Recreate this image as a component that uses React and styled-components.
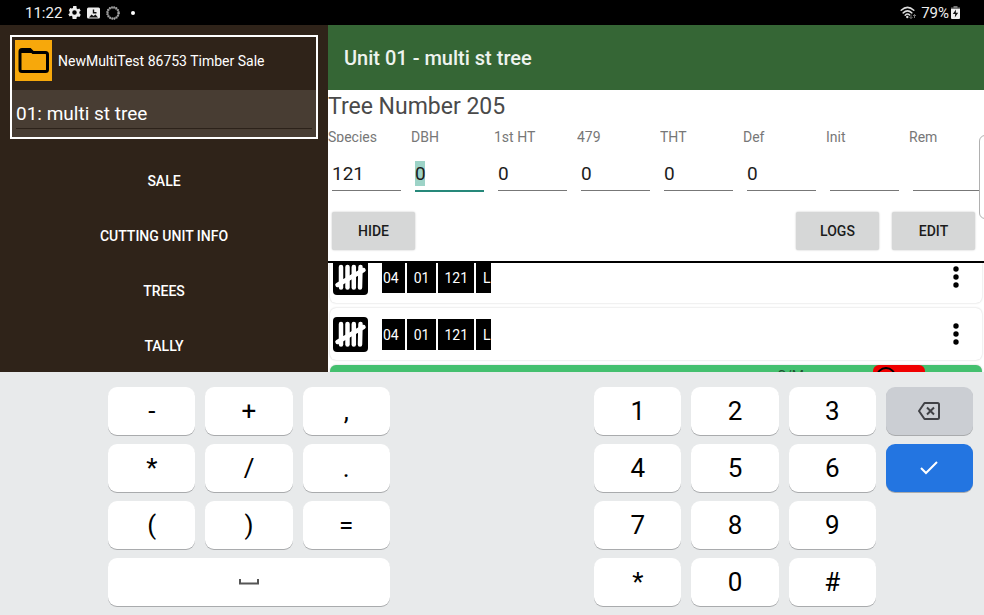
import React from "react";
import styled, { createGlobalStyle } from "styled-components";

const GlobalStyle = createGlobalStyle`
  *, *::before, *::after { box-sizing: border-box; }
  body { margin: 0; font-family: Roboto, "Noto Sans", sans-serif; background: #e8eaeb; }
  button, input, select { font: inherit; color: inherit; margin: 0; }
  ul { list-style: none; margin: 0; padding: 0; }
`;

const Screen = styled.div`
  display: grid;
  grid-template-rows: auto minmax(0, 1fr) auto;
  height: 100vh;
  overflow: hidden;
`;

const StatusBar = styled.header`
  display: flex;
  justify-content: space-between;
  align-items: center;
  height: 25px;
  padding: 0 24px 0 25px;
  background: #000;
  color: #eee;
  font-size: 15px;
  line-height: 24px;
`;

const StatusGroup = styled.div`
  display: flex;
  align-items: center;
  gap: ${(p) => p.$gap}px;
`;

const Main = styled.div`
  display: grid;
  grid-template-columns: minmax(0, 1fr) minmax(0, 2fr);
  min-height: 0;
`;

const Sidebar = styled.aside`
  padding: 10px;
  background: #2f2319;
  color: #fff;
  overflow: hidden;
`;

const SaleCard = styled.section`
  border: 2px solid #fff;
`;

const SaleHead = styled.div`
  display: flex;
  align-items: flex-start;
  gap: 6px;
  height: 53px;
  padding: 3px;
  font-size: 14px;
  line-height: 42px;
`;

const FolderTile = styled.div`
  display: flex;
  width: 37px;
  height: 41px;
  background: #f7a80b;
`;

const UnitPicker = styled.div`
  height: 47px;
  padding: 9px 4px 8px;
  background: #483d33;
`;

const UnitSelect = styled.select`
  display: block;
  appearance: none;
  width: 100%;
  height: 30px;
  padding: 0;
  border: 0;
  border-bottom: 1px solid #2c221a;
  border-radius: 0;
  background: transparent;
  font-size: 19px;
  outline: none;
`;

const Nav = styled.nav`
  display: flex;
  flex-direction: column;
  gap: 7px;
  padding-top: 18px;
`;

const NavButton = styled.button`
  height: 48px;
  padding: 0;
  border: 0;
  background: transparent;
  font-size: 14px;
  font-weight: 500;
  text-transform: uppercase;
`;

const Content = styled.main`
  position: relative;
  display: flex;
  flex-direction: column;
  min-height: 0;
  background: #fff;
  overflow: hidden;
`;

const TitleBar = styled.h1`
  flex: none;
  margin: 0;
  padding: 2px 16px 0;
  background: #356635;
  color: #eef3ee;
  font-size: 20px;
  font-weight: 500;
  line-height: 63px;
`;

const TreeForm = styled.form`
  flex: none;
  border-bottom: 2px solid #000;
`;

const TreeHeading = styled.h2`
  margin: 0;
  padding-top: 2px;
  color: #4a4a4a;
  font-size: 23px;
  font-weight: 400;
  line-height: 30px;
`;

const Fields = styled.div`
  display: flex;
  overflow: hidden;
`;

const Field = styled.label`
  flex: none;
  width: 83px;
`;

const FieldLabel = styled.span`
  display: block;
  height: 20px;
  overflow: hidden;
  padding-top: 7px;
  color: #777;
  font-size: 14px;
  line-height: 16px;
`;

const FieldInput = styled.input`
  display: block;
  width: 69px;
  height: ${(p) => (p.$active ? 40 : 39)}px;
  margin: 10px 10px 0 4px;
  padding: ${(p) => (p.$active ? "5px 0 0" : "4px 0 0")};
  border: 0;
  border-bottom: ${(p) => (p.$active ? "2px solid #26887a" : "1px solid #777")};
  border-radius: 0;
  background: ${(p) =>
    p.$active
      ? "linear-gradient(#9dd3c7, #9dd3c7) 0 9px / 10px 25px no-repeat"
      : "transparent"};
  color: #1c1c1c;
  font-size: 19px;
  outline: none;
`;

const FormActions = styled.div`
  display: flex;
  gap: 13px;
  padding: 20px 9px 11px 4px;
`;

const ActionButton = styled.button`
  width: 83px;
  height: 38px;
  margin-right: ${(p) => (p.$pushRest ? "auto" : "0")};
  padding: 0;
  border: 0;
  border-radius: 2px;
  background: #d6d7d7;
  box-shadow: 0 0 2px rgba(0, 0, 0, 0.25);
  color: #1c1c1c;
  font-size: 14px;
  font-weight: 500;
`;

const EdgeHandle = styled.div`
  position: absolute;
  top: 110px;
  right: -12px;
  width: 17px;
  height: 84px;
  border: 1px solid #b0b0b0;
  border-radius: 6px;
  background: #fff;
`;

const ListViewport = styled.div`
  flex: 1;
  min-height: 0;
  overflow: hidden;
`;

const TallyList = styled.ul`
  display: flex;
  flex-direction: column;
  gap: 5px;
  margin-top: -12px;
  padding: 0 2px;
`;

const TallyCard = styled.li`
  display: flex;
  align-items: center;
  height: 52px;
  padding: 0 14px 0 3px;
  border-radius: 6px;
  background: ${(p) => (p.$highlight ? "#44c06f" : "#fff")};
  box-shadow: 0 0 2px rgba(0, 0, 0, 0.22);
  overflow: hidden;
`;

const ChipStrip = styled.div`
  width: 109px;
  margin: 0 auto 0 14px;
  overflow: hidden;
`;

const ChipTrack = styled.div`
  display: flex;
  gap: 2px;
  margin-left: -6px;
`;

const Chip = styled.span`
  flex: none;
  padding: 1px 6px 0 7px;
  background: #000;
  color: #fff;
  font-size: 14px;
  line-height: 30px;
`;

const MoreButton = styled.button`
  display: flex;
  justify-content: center;
  width: 24px;
  padding: 0;
  border: 0;
  background: transparent;
`;

const MeasureLabel = styled.span`
  align-self: flex-start;
  margin-left: auto;
  padding-top: 3px;
  color: #1d5230;
  font-size: 14px;
  line-height: 16px;
`;

const RemoveButton = styled.button`
  display: flex;
  align-items: flex-start;
  align-self: flex-start;
  width: 52px;
  height: 48px;
  margin: 0 43px 0 69px;
  padding: 1px 2px;
  border: 0;
  border-radius: 6px;
  background: #f00000;
`;

const Keyboard = styled.section`
  display: grid;
  grid-template-columns: repeat(10, minmax(0, 1fr));
  grid-auto-rows: 48px;
  gap: 9px 10px;
  padding: 15px 11px 9px;
  background: #e8eaeb;
`;

const keyColors = {
  plain: { bg: "#fff", ink: "#000" },
  muted: { bg: "#cbced3", ink: "#414246" },
  accent: { bg: "#2375e1", ink: "#fff" },
};

const Key = styled.button`
  grid-column: ${(p) => p.$col} / span ${(p) => p.$span || 1};
  grid-row: ${(p) => p.$row};
  display: flex;
  align-items: center;
  justify-content: center;
  padding: 0;
  border: 0;
  border-radius: 9px;
  background: ${(p) => keyColors[p.$tone || "plain"].bg};
  color: ${(p) => keyColors[p.$tone || "plain"].ink};
  box-shadow: 0 1px 0 #a9abad;
  font-size: 26px;
  line-height: 48px;
`;

function FolderIcon() {
  return (
    <svg width="37" height="41" viewBox="0 0 37 41" aria-hidden="true">
      <path d="M5 15V11.500Q5 9.500 7 9.500H15L18 12.500H30.500Q32.500 12.500 32.500 14.500V29.500Q32.500 31.500 30.500 31.500H7Q5 31.500 5 29.500Z" fill="none" stroke="#000" strokeWidth="3" />
      <path d="M5 9H15L18 13H5Z" fill="#000" />
    </svg>
  );
}

function GearIcon() {
  return (
    <svg width="13" height="13" viewBox="2 2 20 20" aria-hidden="true">
      <path fill="#eee" fillRule="evenodd" d="M19.400 13a7.500 7.500 0 0 0 0-2l2.100-1.600-2-3.500-2.500 1a7.500 7.500 0 0 0-1.700-1L15 2h-5l-.4 2.900a7.500 7.500 0 0 0-1.700 1l-2.500-1-2 3.500L4.600 11a7.500 7.500 0 0 0 0 2l-2.100 1.600 2 3.500 2.500-1a7.500 7.500 0 0 0 1.700 1L9 22h6l.4-2.900a7.500 7.500 0 0 0 1.700-1l2.500 1 2-3.500ZM12 15.500a3.500 3.500 0 1 1 0-7 3.500 3.500 0 0 1 0 7Z" />
    </svg>
  );
}

function PictureIcon() {
  return (
    <svg width="13" height="12" viewBox="0 0 13 12" aria-hidden="true">
      <rect x="0" y="0.500" width="13" height="11" rx="1.500" fill="#eee" />
      <path d="M2 10.500L4.500 7.500L6.500 9L8.500 7.500L11 10.500Z" fill="#111" />
      <path d="M6.500 2.500V5.800H9.500" fill="none" stroke="#111" strokeWidth="1.400" />
    </svg>
  );
}

function SpinnerIcon() {
  return (
    <svg width="14" height="14" viewBox="0 0 14 14" aria-hidden="true">
      <circle cx="7" cy="7" r="5.600" fill="none" stroke="#777" strokeWidth="1.600" />
      <circle cx="7" cy="7" r="5.600" fill="none" stroke="#aaa" strokeWidth="2.400" strokeDasharray="1 1.200" />
    </svg>
  );
}

function DotIcon() {
  return (
    <svg width="14" height="4" viewBox="0 0 14 4" aria-hidden="true">
      <circle cx="7" cy="2" r="2" fill="#fff" />
    </svg>
  );
}

function WifiIcon() {
  return (
    <svg width="17" height="14" viewBox="0 0 17 14" aria-hidden="true">
      <g fill="none" stroke="#ddd" strokeWidth="1.500" strokeLinecap="round">
        <path d="M1.200 4.300Q7.500 -1.500 13.800 4.300" />
        <path d="M3.200 6.900Q7.500 2.900 11.800 6.900" />
        <path d="M5.200 9.200Q7.500 7.100 9.500 8.900" />
      </g>
      <circle cx="7.300" cy="11" r="1.200" fill="#ddd" />
      <path d="M11 8.500V12.500M9.500 11L11 12.600L12.500 11M14.500 12V8.500M13 10L14.500 8.400L16 10" fill="none" stroke="#777" />
    </svg>
  );
}

function BatteryIcon() {
  return (
    <svg width="9" height="13" viewBox="0 0 9 13" aria-hidden="true">
      <path d="M2.500 0H6.500V1.500H9V4H0V1.500H2.500Z" fill="#777" />
      <path d="M0 3H9V12Q9 13 8 13H1Q0 13 0 12Z" fill="#eee" />
      <path d="M5 3.500L1.800 8H4.200L3.800 11.500L7.200 6.800H4.800Z" fill="#111" />
    </svg>
  );
}

function TallyIcon() {
  return (
    <svg width="35" height="35" viewBox="0 0 35 35" aria-hidden="true">
      <rect width="35" height="35" rx="4" fill="#000" />
      <g stroke="#fff" strokeWidth="4.500" strokeLinecap="round" strokeLinejoin="round" fill="none">
        <path d="M8 7V27.500" />
        <path d="M14.500 7V27.500" />
        <path d="M20.800 7V27.500" />
        <path d="M27.500 7L27 27.500" />
        <path d="M4.500 25L30.500 10" />
      </g>
    </svg>
  );
}

function MoreIcon() {
  return (
    <svg width="6" height="22" viewBox="0 0 6 22" aria-hidden="true">
      <circle cx="3" cy="3" r="2.700" />
      <circle cx="3" cy="11" r="2.700" />
      <circle cx="3" cy="19" r="2.700" />
    </svg>
  );
}

function RemoveIcon() {
  return (
    <svg width="22" height="22" viewBox="0 0 22 22" aria-hidden="true">
      <circle cx="11" cy="11" r="9" fill="none" stroke="#000" strokeWidth="2" />
      <path d="M6 11H16" stroke="#000" strokeWidth="2" />
    </svg>
  );
}

function SpaceIcon() {
  return (
    <svg width="20" height="6" viewBox="0 0 20 6" aria-hidden="true">
      <path d="M1 0V4.500H19V0" fill="none" stroke="#555" strokeWidth="2" />
    </svg>
  );
}

function BackspaceIcon() {
  return (
    <svg width="22" height="18" viewBox="0 0 22 18" aria-hidden="true">
      <g fill="none" stroke="currentColor" strokeWidth="2">
        <path d="M6.500 1H19.500Q21 1 21 2.500V15.500Q21 17 19.500 17H6.500L1 9Z" strokeLinejoin="round" />
        <path d="M9 5.500L16 12.500M16 5.500L9 12.500" />
      </g>
    </svg>
  );
}

function CheckIcon() {
  return (
    <svg width="18" height="14" viewBox="0 0 18 14" aria-hidden="true">
      <path d="M1 7L6 12L17 1" fill="none" stroke="currentColor" strokeWidth="2" />
    </svg>
  );
}

const navItems = ["Sale", "Cutting Unit Info", "Trees", "Tally"];

const fields = [
  { label: "Species", value: "121" },
  { label: "DBH", value: "0", active: true },
  { label: "1st HT", value: "0" },
  { label: "479", value: "0" },
  { label: "THT", value: "0" },
  { label: "Def", value: "0" },
  { label: "Init", value: "" },
  { label: "Rem", value: "" },
];

const tallies = [
  { id: 1, chips: ["04", "01", "121", "L"] },
  { id: 2, chips: ["04", "01", "121", "L"] },
];

const keyRows = [
  [[2, "-"], [3, "+"], [4, ","], [7, "1"], [8, "2"], [9, "3"]],
  [[2, "*"], [3, "/"], [4, "."], [7, "4"], [8, "5"], [9, "6"]],
  [[2, "("], [3, ")"], [4, "="], [7, "7"], [8, "8"], [9, "9"]],
  [[7, "*"], [8, "0"], [9, "#"]],
];

export default function App() {
  return (
    <Screen>
      <GlobalStyle />
      <StatusBar>
        <StatusGroup $gap={6}>
          <span>11:22</span>
          <GearIcon />
          <PictureIcon />
          <SpinnerIcon />
          <DotIcon />
        </StatusGroup>
        <StatusGroup $gap={4}>
          <WifiIcon />
          <StatusGroup $gap={2}>
            <span>79%</span>
            <BatteryIcon />
          </StatusGroup>
        </StatusGroup>
      </StatusBar>

      <Main>
        <Sidebar>
          <SaleCard>
            <SaleHead>
              <FolderTile>
                <FolderIcon />
              </FolderTile>
              <span>NewMultiTest 86753 Timber Sale</span>
            </SaleHead>
            <UnitPicker>
              <UnitSelect aria-label="Cutting unit" defaultValue="01">
                <option value="01">01: multi st tree</option>
              </UnitSelect>
            </UnitPicker>
          </SaleCard>
          <Nav>
            {navItems.map((item) => (
              <NavButton key={item} type="button">{item}</NavButton>
            ))}
          </Nav>
        </Sidebar>

        <Content>
          <TitleBar>Unit 01 - multi st tree</TitleBar>
          <TreeForm onSubmit={(e) => e.preventDefault()}>
            <TreeHeading>Tree Number 205</TreeHeading>
            <Fields>
              {fields.map((f) => (
                <Field key={f.label}>
                  <FieldLabel>{f.label}</FieldLabel>
                  <FieldInput type="text" defaultValue={f.value} $active={f.active} />
                </Field>
              ))}
            </Fields>
            <FormActions>
              <ActionButton type="button" $pushRest>HIDE</ActionButton>
              <ActionButton type="button">LOGS</ActionButton>
              <ActionButton type="button">EDIT</ActionButton>
            </FormActions>
          </TreeForm>
          <ListViewport>
            <TallyList>
              {tallies.map((t) => (
                <TallyCard key={t.id}>
                  <TallyIcon />
                  <ChipStrip>
                    <ChipTrack>
                      {t.chips.map((c) => (
                        <Chip key={c}>{c}</Chip>
                      ))}
                    </ChipTrack>
                  </ChipStrip>
                  <MoreButton type="button" aria-label="More options">
                    <MoreIcon />
                  </MoreButton>
                </TallyCard>
              ))}
              <TallyCard $highlight>
                <MeasureLabel>C/M</MeasureLabel>
                <RemoveButton type="button" aria-label="Remove">
                  <RemoveIcon />
                </RemoveButton>
              </TallyCard>
            </TallyList>
          </ListViewport>
          <EdgeHandle />
        </Content>
      </Main>

      <Keyboard aria-label="Number keyboard">
        {keyRows.map((row, r) =>
          row.map(([col, text]) => (
            <Key key={`${r}-${col}`} type="button" $col={col} $row={r + 1}>
              {text}
            </Key>
          ))
        )}
        <Key type="button" aria-label="Space" $col={2} $span={3} $row={4}>
          <SpaceIcon />
        </Key>
        <Key type="button" aria-label="Backspace" $col={10} $row={1} $tone="muted">
          <BackspaceIcon />
        </Key>
        <Key type="button" aria-label="Done" $col={10} $row={2} $tone="accent">
          <CheckIcon />
        </Key>
      </Keyboard>
    </Screen>
  );
}
